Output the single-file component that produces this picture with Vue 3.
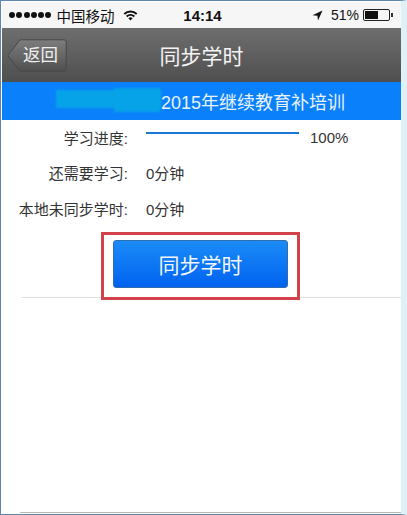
<template>
  <div class="screen">
    <div class="status-bar">
      <div class="status-left">
        <span class="signal"><i v-for="n in 6" :key="n"></i></span>
        <span class="carrier">中国移动</span>
        <svg class="wifi" width="15" height="12" viewBox="0 0 15 12">
          <path d="M0.6 4.2A10 10 0 0 1 14.4 4.2L13 5.7A8 8 0 0 0 2 5.7Z" fill="#111" />
          <path d="M3 6.7A6.6 6.6 0 0 1 12 6.7L10.6 8.2A4.6 4.6 0 0 0 4.4 8.2Z" fill="#111" />
          <path d="M5.4 9.2A3.2 3.2 0 0 1 9.6 9.2L7.5 11.6Z" fill="#111" />
        </svg>
      </div>
      <div class="clock">14:14</div>
      <div class="status-right">
        <svg class="arrow" width="11" height="11" viewBox="0 0 11 11">
          <path d="M10.5 0.5L0.5 5.2L5.4 5.7L6 10.5Z" fill="#111" />
        </svg>
        <span class="percent">51%</span>
        <span class="battery"><span class="battery-fill"></span></span>
        <span class="battery-tip"></span>
      </div>
    </div>

    <div class="nav-bar">
      <div class="back-btn">
        <svg class="back-shape" width="60" height="33" viewBox="0 0 60 33">
          <defs>
            <linearGradient id="backFill" x1="0" y1="0" x2="0" y2="1">
              <stop offset="0" stop-color="#7d7d7d" />
              <stop offset="1" stop-color="#505050" />
            </linearGradient>
          </defs>
          <path d="M0.8 16.5L13 0.8H57Q59.2 0.8 59.2 3V30Q59.2 32.2 57 32.2H13Z" fill="url(#backFill)" stroke="#484848" />
        </svg>
        <span class="back-label">返回</span>
      </div>
      <div class="nav-title">同步学时</div>
    </div>

    <div class="banner">
      <span class="smudge"></span>
      <span class="smudge-extra"></span>
      <span class="banner-text">2015年继续教育补培训</span>
    </div>

    <div class="info">
      <div class="row first">
        <span class="label">学习进度:</span>
        <span class="progress"></span>
        <span class="percent-value">100%</span>
      </div>
      <div class="row">
        <span class="label">还需要学习:</span>
        <span class="value">0分钟</span>
      </div>
      <div class="row">
        <span class="label">本地未同步学时:</span>
        <span class="value">0分钟</span>
      </div>
    </div>

    <div class="action">
      <button class="sync-btn">同步学时</button>
      <div class="highlight"></div>
    </div>
    <div class="divider"></div>
    <div class="bottom-line"></div>
  </div>
</template>

<script setup>
</script>

<style>
html, body {
  margin: 0;
  background: #fff;
}
</style>

<style scoped>
.screen {
  position: relative;
  box-sizing: border-box;
  width: 407px;
  height: 515px;
  display: flex;
  flex-direction: column;
  padding: 1px 0 1px 1px;
  background: #fff;
  border: 1px solid #5f86ad;
  border-right: 6px solid #dff0f6;
  font-family: "Liberation Sans", "Noto Sans CJK SC", sans-serif;
  color: #333;
  overflow: hidden;
}

.status-bar {
  height: 26px;
  flex: none;
  display: flex;
  align-items: center;
  justify-content: space-between;
  background: #f6f6f6;
  color: #111;
  font-size: 14px;
  padding: 0 8px 0 7px;
}

.status-left,
.status-right {
  width: 150px;
  display: flex;
  align-items: center;
}

.status-right {
  justify-content: flex-end;
}

.signal {
  display: flex;
  gap: 1.3px;
  margin-right: 5px;
}

.signal i {
  width: 6px;
  height: 6px;
  border-radius: 50%;
  background: #111;
}

.carrier {
  font-size: 14.5px;
  margin-right: 9px;
}

.clock {
  font-size: 15px;
  font-weight: 700;
  margin-left: 3px;
}

.percent {
  font-size: 14px;
  margin: 0 4px 0 8px;
}

.battery {
  box-sizing: border-box;
  width: 27px;
  height: 12px;
  border: 1px solid #222;
  border-radius: 2px;
  padding: 1px;
  display: flex;
}

.battery-fill {
  width: 13px;
  background: #111;
}

.battery-tip {
  width: 2px;
  height: 4px;
  margin-left: 1px;
  background: #333;
}

.nav-bar {
  position: relative;
  height: 54px;
  flex: none;
  display: flex;
  align-items: center;
  justify-content: center;
  background: linear-gradient(#6e6e6e, #4f4f4f);
}

.back-btn {
  position: absolute;
  left: 5px;
  top: 11px;
  width: 60px;
  height: 33px;
}

.back-shape {
  display: block;
}

.back-label {
  position: absolute;
  left: 16px;
  top: 5px;
  font-size: 17.5px;
  line-height: 22px;
  color: #f0f0f0;
}

.nav-title {
  font-size: 21px;
  color: #f4f4f4;
}

.banner {
  height: 38px;
  flex: none;
  display: flex;
  align-items: center;
  justify-content: flex-end;
  background: #0a80fb;
  padding-right: 56px;
  position: relative;
}

.smudge {
  position: absolute;
  left: 54px;
  top: 8px;
  width: 105px;
  height: 18px;
  background: #07a3e8;
  filter: blur(1px);
}

.smudge-extra {
  position: absolute;
  left: 112px;
  top: 6px;
  width: 46px;
  height: 24px;
  background: #07a3e8;
  filter: blur(1px);
}

.banner-text {
  position: relative;
  font-size: 18px;
  color: #e8f3ff;
}

.info {
  flex: none;
  display: flex;
  flex-direction: column;
}

.row {
  display: flex;
  align-items: center;
  height: 36px;
  font-size: 15px;
}

.row.first {
  height: 34px;
}

.label {
  width: 126px;
  text-align: right;
  flex: none;
}

.value {
  margin-left: 18px;
}

.progress {
  width: 153px;
  height: 2px;
  margin: 0 0 9px 18px;
  background: #1976d2;
  flex: none;
}

.percent-value {
  margin-left: 11px;
}

.action {
  position: relative;
  flex: none;
  display: flex;
  justify-content: center;
  padding-top: 14px;
  margin-right: 2px;
}

.sync-btn {
  width: 175px;
  height: 48px;
  border: 1px solid #2f6cb0;
  border-radius: 3px;
  background: linear-gradient(#1b8bf7, #0063f0);
  color: #f2f7ff;
  font-family: inherit;
  font-size: 21px;
  padding: 0;
}

.highlight {
  position: absolute;
  left: 99px;
  top: 6px;
  box-sizing: border-box;
  width: 199px;
  height: 68px;
  border: 3px solid #d2424a;
}

.divider {
  height: 1px;
  flex: none;
  margin: 9px 0 0 19px;
  background: #e2e2e2;
}

.bottom-line {
  position: absolute;
  left: 19px;
  right: 0;
  bottom: 1px;
  height: 1px;
  background: #b9b9b9;
}
</style>
